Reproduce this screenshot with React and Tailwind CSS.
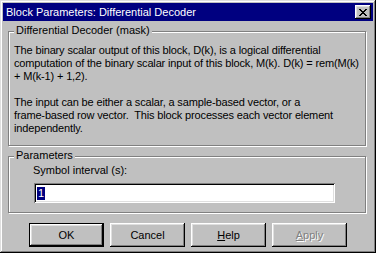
import React from 'react';

const raised =
  'shadow-[inset_-1px_-1px_0_#000,inset_1px_1px_0_#fff,inset_-2px_-2px_0_#808080,inset_2px_2px_0_#dfdfdf]';

const GroupBox = ({ title, className = '', children }) => (
  <div
    className={`relative border border-[#808080] shadow-[1px_1px_0_#fff,inset_1px_1px_0_#fff] ${className}`}
  >
    <span className="absolute left-[5px] top-[-8px] bg-[#c0c0c0] px-[2px] leading-[13px]">{title}</span>
    {children}
  </div>
);

const Button = ({ children, isDefault, disabled }) => (
  <button
    className={`w-[75px] h-[24px] bg-[#c0c0c0] flex items-center justify-center leading-[13px] ${
      isDefault ? 'border border-black' : ''
    } ${raised} ${disabled ? 'text-[#808080] [text-shadow:1px_1px_0_#fff]' : 'text-black'}`}
  >
    {children}
  </button>
);

export default function App() {
  return (
    <div
      className="w-[376px] h-[253px] bg-[#c0c0c0] p-[3px] text-[11px] text-black shadow-[inset_-1px_-1px_0_#000,inset_1px_1px_0_#dfdfdf,inset_-2px_-2px_0_#808080,inset_2px_2px_0_#fff]"
      style={{ fontFamily: '"Liberation Sans", Arial, sans-serif' }}
    >
      {/* Title bar */}
      <div className="h-[18px] bg-[#000080] flex items-center justify-between pl-[3px] pr-[2px]">
        <span className="text-white text-[11px] leading-[16px]">Block Parameters: Differential Decoder</span>
        <div className={`w-[16px] h-[14px] bg-[#c0c0c0] flex items-center justify-center ${raised}`}>
          <svg width="8" height="7" viewBox="0 0 8 7">
            <path d="M0 0h2v1h1v1h2V1h1V0h2v1H7v1H6v1H5v1h1v1h1v1h1v1H6V6H5V5H3v1H2v1H0V6h1V5h1V4h1V3H2V2H1V1H0z" fill="#000" />
          </svg>
        </div>
      </div>

      {/* Description */}
      <GroupBox title="Differential Decoder (mask)" className="mt-[10px] ml-[5px] w-[358px] pt-[12px] pb-[10px] pl-[5px] pr-[2px]">
        <div className="leading-[13px] whitespace-nowrap tracking-[-0.15px]">
          <p>
            The binary scalar output of this block, D(k), is a logical differential
            <br />
            computation of the binary scalar input of this block, M(k). D(k) = rem(M(k)
            <br />+ M(k-1) + 1,2).
          </p>
          <p className="mt-[13px]">
            The input can be either a scalar, a sample-based vector, or a
            <br />
            frame-based row vector.&nbsp; This block processes each vector element
            <br />
            independently.
          </p>
        </div>
      </GroupBox>

      {/* Parameters */}
      <GroupBox title="Parameters" className="mt-[10px] ml-[5px] w-[358px] pt-[7px] pb-[9px] pl-[24px]">
        <div className="leading-[13px]">Symbol interval (s):</div>
        <div className="mt-[6px] ml-[1px] w-[301px] h-[20px] bg-white flex items-center pl-[3px] shadow-[inset_1px_1px_0_#808080,inset_-1px_-1px_0_#fff,inset_2px_2px_0_#000,inset_-2px_-2px_0_#dfdfdf]">
          <span className="bg-[#000080] text-white leading-[13px] px-[1px]">1</span>
        </div>
      </GroupBox>

      {/* Buttons */}
      <div className="mt-[10px] ml-[26px] flex gap-[6px]">
        <Button isDefault>OK</Button>
        <Button>Cancel</Button>
        <Button>
          <span>
            <span className="underline">H</span>elp
          </span>
        </Button>
        <Button disabled>
          <span>
            <span className="underline">A</span>pply
          </span>
        </Button>
      </div>
    </div>
  );
}
